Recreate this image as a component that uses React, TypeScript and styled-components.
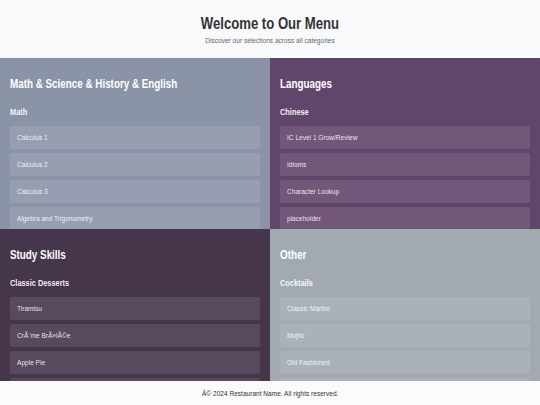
import React from 'react';
import styled, { createGlobalStyle, css } from 'styled-components';

const GlobalStyle = createGlobalStyle`
  html, body {
    margin: 0;
    padding: 0;
    background: #f8f9fb;
  }
  body {
    font-family: "Liberation Sans", Arial, Helvetica, sans-serif;
    color: #333;
  }
`;

// the reference type is a narrow grotesque; squeeze Liberation Sans to match
const narrow = css`
  display: block;
  white-space: nowrap;
  transform: scaleX(0.82);
`;

interface Category {
  title: string;
  subtitle: string;
  items: string[];
  bg: string;
}

const categories: Category[] = [
  {
    title: 'Math & Science & History & English',
    subtitle: 'Math',
    items: ['Calculus 1', 'Calculus 2', 'Calculus 3', 'Algebra and Trigonometry', 'Statistics'],
    bg: '#8b93a6',
  },
  {
    title: 'Languages',
    subtitle: 'Chinese',
    items: ['IC Level 1 Grow/Review', 'Idioms', 'Character Lookup', 'placeholder', 'Vocabulary'],
    bg: '#61466b',
  },
  {
    title: 'Study Skills',
    subtitle: 'Classic Desserts',
    items: ['Tiramisu', 'CrÃ¨me BrÃ»lÃ©e', 'Apple Pie', 'Chocolate Cake'],
    bg: '#46364c',
  },
  {
    title: 'Other',
    subtitle: 'Cocktails',
    items: ['Classic Martini', 'Mojito', 'Old Fashioned', 'Margarita'],
    bg: '#a2a9b0',
  },
];

const Page = styled.div`
  min-height: 100vh;
  display: flex;
  flex-direction: column;
`;

const Header = styled.header`
  height: 58px;
  box-sizing: border-box;
  padding-top: 15px;
  text-align: center;
  background: #f8f9fb;
  box-shadow: 0 1px 2px rgba(0, 0, 0, 0.06);
  position: relative;
  z-index: 1;
`;

const Title = styled.h1`
  ${narrow}
  margin: 0;
  font-size: 16px;
  line-height: 18px;
  font-weight: 700;
  color: #333;
`;

const Subtitle = styled.p`
  ${narrow}
  margin: 3px 0 0;
  font-size: 8px;
  line-height: 10px;
  color: #666;
`;

const Grid = styled.main`
  display: grid;
  grid-template-columns: 1fr 1fr;
  grid-auto-rows: 171px;
`;

const Section = styled.section<{ $bg: string }>`
  background: ${(p) => p.$bg};
  padding: 19px 10px 0;
  overflow: hidden;
  color: #fff;
`;

const SectionTitle = styled.h2`
  ${narrow}
  transform-origin: left center;
  margin: 0;
  font-size: 12px;
  line-height: 14px;
  font-weight: 700;
  color: #fff;
`;

const SubHeading = styled.h3`
  ${narrow}
  transform-origin: left center;
  margin: 16px 0 0;
  font-size: 9px;
  line-height: 10px;
  font-weight: 700;
  color: rgba(255, 255, 255, 0.95);
`;

const ItemList = styled.ul`
  list-style: none;
  margin: 9px 0 0;
  padding: 0;
  display: flex;
  flex-direction: column;
  gap: 4px;
`;

const Item = styled.li`
  height: 23px;
  display: flex;
  align-items: center;
  padding: 0 7px;
  border-radius: 2px;
  background: rgba(255, 255, 255, 0.1);
  font-size: 8px;
  color: rgba(255, 255, 255, 0.88);
`;

const ItemLabel = styled.span`
  ${narrow}
  transform-origin: left center;
`;

const Footer = styled.footer`
  position: fixed;
  left: 0;
  right: 0;
  bottom: 0;
  height: 24px;
  display: flex;
  align-items: center;
  justify-content: center;
  background: #fbfbfc;
  font-size: 8px;
  color: #333;
`;

const FooterText = styled.span`
  ${narrow}
`;

export default function App() {
  return (
    <Page>
      <GlobalStyle />
      <Header>
        <Title>Welcome to Our Menu</Title>
        <Subtitle>Discover our selections across all categories</Subtitle>
      </Header>
      <Grid>
        {categories.map((cat) => (
          <Section key={cat.title} $bg={cat.bg}>
            <SectionTitle>{cat.title}</SectionTitle>
            <SubHeading>{cat.subtitle}</SubHeading>
            <ItemList>
              {cat.items.map((item) => (
                <Item key={item}>
                  <ItemLabel>{item}</ItemLabel>
                </Item>
              ))}
            </ItemList>
          </Section>
        ))}
      </Grid>
      <Footer>
        <FooterText>Â© 2024 Restaurant Name. All rights reserved.</FooterText>
      </Footer>
    </Page>
  );
}
